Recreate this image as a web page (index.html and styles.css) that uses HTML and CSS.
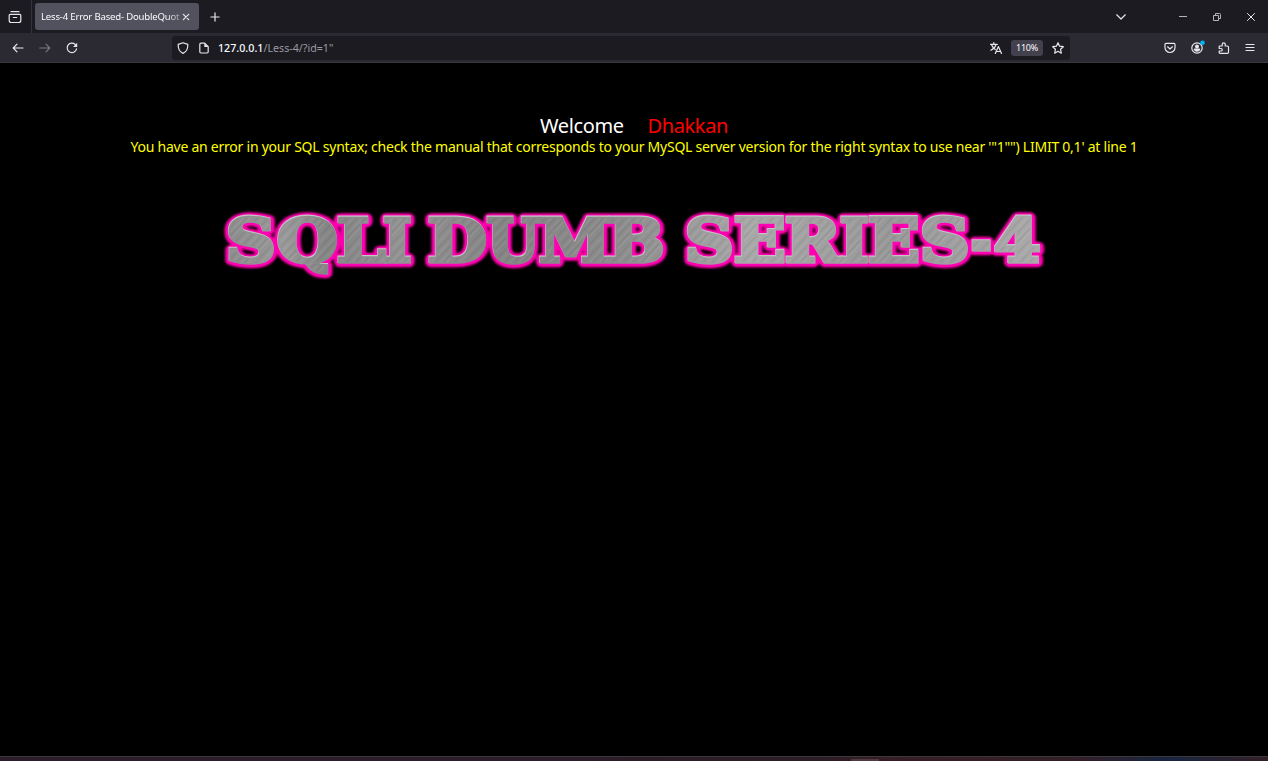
FILE: index.html
```html
<!DOCTYPE html>
<html lang="en">
<head>
<meta charset="utf-8">
<title>Less-4 Error Based- DoubleQuotes String</title>
<link rel="stylesheet" href="styles.css">
</head>
<body>
<div class="window">
  <header class="tabbar">
    <div class="tabview"><svg class="icon" width="14" height="14" viewBox="0 0 14 14"><path d="M3 1.7h8M2.2 4.3h9.6q1 0 1 1v5.2q0 2-2 2H3.200q-2 0-2-2V5.300q0-1 1-1zM5.300 7.500h3.400"/></svg></div>
    <div class="tab"><span class="tab-title">Less-4 Error Based- DoubleQuot</span><svg class="icon" width="8" height="8" viewBox="0 0 8 8"><path d="M1.300 1.300l5.400 5.400M6.700 1.300L1.300 6.700"/></svg></div>
    <svg class="icon plus" width="10" height="10" viewBox="0 0 10 10"><path d="M5 .9v8.200M.9 5h8.200"/></svg>
    <div class="controls">
      <svg class="icon" width="12" height="12" viewBox="0 0 12 12"><path d="M1.700 3.800L6 8l4.300-4.200"/></svg>
      <svg class="icon thin minimize" width="10" height="10" viewBox="0 0 10 10"><path d="M1 4.500h8"/></svg>
      <svg class="icon thin restore" width="10" height="10" viewBox="0 0 10 10"><path d="M1.500 3.500h5v5h-5zM3.500 3.500v-2h4q1 0 1 1v4h-2"/></svg>
      <svg class="icon thin close" width="10" height="10" viewBox="0 0 10 10"><path d="M1.200 1.200l7.600 7.600M8.800 1.200L1.200 8.800"/></svg>
    </div>
  </header>
  <nav class="toolbar">
    <div class="nav-buttons">
      <svg class="icon" width="12" height="12" viewBox="0 0 12 12"><path d="M11 6H1.200M5 2.200L1.200 6 5 9.800"/></svg>
      <svg class="icon dim" width="12" height="12" viewBox="0 0 12 12"><path d="M.7 6H10.800M7 2.200L10.800 6 7 9.800"/></svg>
      <svg class="icon" width="12" height="12" viewBox="0 0 12 12"><path d="M10.500 6.800A4.700 4.700 0 1 1 9 2.300l1.300 1.300"/><path class="solid" d="M11.200.8v4.100H7.100z"/></svg>
    </div>
    <div class="urlbar">
      <svg class="icon" width="12" height="12" viewBox="0 0 12 12"><path d="M6 .7l4.800 1.700c.3 4-1 7.200-4.800 9C2.200 9.600.9 6.400 1.200 2.400z"/></svg>
      <svg class="icon page" width="12" height="12" viewBox="0 0 12 12"><path d="M3 1.200h3.700l3.500 3.500v5.100q0 1.200-1.200 1.200H3q-1.200 0-1.200-1.200V2.400Q1.800 1.200 3 1.200z"/><path class="solid" d="M6.300 1l4 4h-4z"/></svg>
      <span class="url"><b>127.0.0.1</b>/Less-4/?id=1"</span>
      <svg class="icon translate" width="12" height="12" viewBox="0 0 12 12"><path d="M.5 2.300h6.800M3.800.5v1.800M6 2.500C5.300 5 3.400 7 .8 8.200M1.800 3.300c.8 2 2 3.300 3.500 4.200M5.300 11.500L8.400 4.500l3.100 7M6.300 9.500h4.200"/></svg>
      <span class="zoom">110%</span>
      <svg class="icon" width="12" height="12" viewBox="0 0 12 12"><path d="M6 .7l1.600 3.500 3.700.5-2.700 2.600.7 3.900L6 9.300l-3.300 1.900.7-3.900L.7 4.700l3.700-.5z"/></svg>
    </div>
    <div class="actions">
      <svg class="icon" width="12" height="12" viewBox="0 0 12 12"><path d="M2 1.400h8q1 0 1 1V5.500a5 5 0 0 1-10 0V2.400q0-1 1-1zM3.600 4.800L6 7l2.400-2.200"/></svg>
      <svg class="icon" width="16" height="16" viewBox="0 0 16 16"><circle cx="8" cy="8" r="5.200"/><circle class="solid" cx="8" cy="6.400" r="2"/><path class="solid" d="M4.700 9.500q0-1 1-1h4.600q1 0 1 1-1 2.200-3.300 2.200t-3.300-2.200z"/><circle class="badge" cx="13.500" cy="2.700" r="2.300"/></svg>
      <svg class="icon puzzle" width="12" height="12" viewBox="0 0 12 12"><path d="M1.200 4h3V2.300a1.500 1.500 0 0 1 3 0V4h2.100q1.200 0 1.200 1.200v5q0 1.200-1.200 1.200H2.200q-1 0-1-1V9H3a1.200 1.200 0 0 0 0-2.500H1.200z"/></svg>
      <svg class="icon" width="10" height="12" viewBox="0 0 10 12"><path d="M1 2.500h8M1 5.500h8M1 8.500h8"/></svg>
    </div>
  </nav>
  <main class="page-body">
    <h1 class="welcome"><span>Welcome</span><span class="name">Dhakkan</span></h1>
    <p class="error">You have an error in your SQL syntax; check the manual that corresponds to your MySQL server version for the right syntax to use near '"1"") LIMIT 0,1' at line 1</p>
    <svg class="logo" width="840" height="84" viewBox="214 200 840 84">
      <defs>
        <linearGradient id="steel" gradientUnits="userSpaceOnUse" x1="220" y1="230" x2="1040" y2="250">
          <stop offset="0" stop-color="#8b8b8b"/><stop offset=".08" stop-color="#999"/><stop offset=".13" stop-color="#858585"/><stop offset=".22" stop-color="#929292"/><stop offset=".34" stop-color="#858585"/><stop offset=".48" stop-color="#8b8b8b"/><stop offset=".65" stop-color="#a8a8a8"/><stop offset=".82" stop-color="#989898"/><stop offset="1" stop-color="#aaa"/>
        </linearGradient>
        <pattern id="brush" width="29" height="40" patternUnits="userSpaceOnUse" patternTransform="rotate(43)">
          <path d="M1 0v40M8 0v40M12.500 0v40M22 0v40" stroke="#fff" stroke-opacity=".1"/>
          <path d="M4 0v40M10 0v40M18 0v40M26 0v40" stroke="#000" stroke-opacity=".1"/>
        </pattern>
        <filter id="glow" x="-5%" y="-30%" width="110%" height="160%"><feGaussianBlur stdDeviation="1.300"/></filter>
        <g id="word">
          <text x="226" y="261.500" textLength="50" lengthAdjust="spacingAndGlyphs">S</text>
          <text x="277" y="261.500" textLength="61" lengthAdjust="spacingAndGlyphs">Q</text>
          <text x="337" y="261.500" textLength="49" lengthAdjust="spacingAndGlyphs">L</text>
          <text x="383" y="261.500" textLength="29" lengthAdjust="spacingAndGlyphs">I</text>
          <text x="428" y="261.500" textLength="59" lengthAdjust="spacingAndGlyphs">D</text>
          <text x="487" y="261.500" textLength="53" lengthAdjust="spacingAndGlyphs">U</text>
          <text x="539" y="261.500" textLength="72" lengthAdjust="spacingAndGlyphs">M</text>
          <text x="608" y="261.500" textLength="57" lengthAdjust="spacingAndGlyphs">B</text>
          <text x="685" y="261.500" textLength="49" lengthAdjust="spacingAndGlyphs">S</text>
          <text x="734" y="261.500" textLength="52" lengthAdjust="spacingAndGlyphs">E</text>
          <text x="785" y="261.500" textLength="56" lengthAdjust="spacingAndGlyphs">R</text>
          <text x="840" y="261.500" textLength="29" lengthAdjust="spacingAndGlyphs">I</text>
          <text x="868" y="261.500" textLength="52" lengthAdjust="spacingAndGlyphs">E</text>
          <text x="920" y="261.500" textLength="50" lengthAdjust="spacingAndGlyphs">S</text>
          <text x="971" y="261.500" textLength="21" lengthAdjust="spacingAndGlyphs">-</text>
          <text x="994" y="261.500" textLength="47" lengthAdjust="spacingAndGlyphs">4</text>
        </g>
      </defs>
      <use href="#word" class="halo" filter="url(#glow)"/>
      <use href="#word" class="rim"/>
      <use href="#word" class="shine" x="-.4" y="-.3"/>
      <use href="#word" class="metal"/>
      <use href="#word" class="grain"/>
    </svg>
  </main>
  <footer class="taskbar"><span class="task"></span></footer>
</div>
</body>
</html>
```
FILE: styles.css
```css
* { box-sizing: border-box; }
body { margin: 0; background: #000; overflow: hidden; font-family: "Noto Sans", "Open Sans", sans-serif; }
.window { display: flex; flex-direction: column; width: 1268px; height: 761px; }
.icon { flex: none; display: block; fill: none; stroke: #e8e8ec; stroke-width: 1.2; stroke-linecap: round; stroke-linejoin: round; overflow: visible; }
.icon .solid { fill: #e8e8ec; stroke: none; }
.icon .badge { fill: #00b3f4; stroke: none; }
.icon.dim { stroke: #77767e; }
.icon.thin { stroke: #b4b4b8; stroke-width: 1; stroke-linecap: butt; }
.tabbar { height: 33px; background: #1c1b22; display: flex; align-items: center; }
.tabview { width: 32px; height: 33px; padding-left: 8px; display: flex; align-items: center; border-right: 1px solid #34333c; }
.tab { margin-left: 3px; width: 164px; height: 27px; padding: 0 9px 0 6px; border-radius: 3px; background: #52515e; display: flex; align-items: center; }
.tab-title { width: 141px; white-space: nowrap; color: #fbfbfe; font-size: 9.6px; letter-spacing: -.2px; mask-image: linear-gradient(to right, #000 126px, rgba(0, 0, 0, .3) 140px); }
.plus { margin-left: 11px; }
.controls { margin-left: auto; padding-right: 12px; display: flex; align-items: center; }
.minimize { margin-left: 51px; }
.restore { margin-left: 24px; }
.icon.close { margin-left: 24px; stroke: #e8e8ec; }
.toolbar { height: 30px; background: #2b2a33; border-bottom: 1px solid #39383f; display: flex; align-items: center; }
.nav-buttons { width: 172px; padding-left: 12px; display: flex; gap: 15px; }
.urlbar { width: 898px; height: 24px; padding: 0 6px 0 5px; border-radius: 3px; background: #1c1b22; display: flex; align-items: center; }
.page { margin-left: 9px; }
.url { margin-left: 8px; color: #9b9aa1; font-size: 10.7px; white-space: nowrap; }
.url b { color: #fbfbfe; font-weight: 500; }
.translate { margin-left: auto; }
.zoom { width: 32px; height: 16px; margin: 0 9px; border-radius: 3px; background: #42414d; color: #fbfbfe; font-size: 9px; line-height: 16px; text-align: center; letter-spacing: -.2px; }
.actions { margin-left: auto; padding-right: 13px; display: flex; align-items: center; gap: 14px; }
.actions .icon:first-child { margin-right: -1px; }
.puzzle { margin: 0 1px 0 -1px; }
.page-body { flex: 1; display: flex; flex-direction: column; align-items: center; padding-top: 51px; }
.welcome { margin: 0; height: 23px; line-height: 24px; display: flex; gap: 24px; font-size: 20px; letter-spacing: -.4px; font-weight: 400; color: #fff; }
.name { color: #f00; }
.error { margin: 0; height: 20px; line-height: 19px; white-space: nowrap; color: #ff0; font-size: 14px; letter-spacing: -.24px; }
.logo { display: block; margin-top: 43px; font-family: "DejaVu Serif", serif; font-weight: 700; font-size: 59.5px; }
.halo { fill: #f0a; stroke: #f0a; stroke-width: 10.5; stroke-linejoin: round; }
.rim { fill: #ff00b4; stroke: #ff00b4; stroke-width: 7.5; stroke-linejoin: round; }
.shine { fill: #c4c4c4; stroke: #c4c4c4; stroke-width: 3.8; }
.metal { fill: url(#steel); stroke: url(#steel); stroke-width: 3.6; }
.grain { fill: url(#brush); stroke: none; }
.taskbar { height: 5px; border-top: 1px solid #3b383b; background: linear-gradient(to right, #2a1c28 0, #2a1c28 45%, #2b1c25 64%, #371d24 70%, #321e26 85%, #182541 92%, #341e26 100%); }
.task { display: block; width: 28px; height: 2px; margin: 2px 0 0 851px; background: #503b40; }
```
